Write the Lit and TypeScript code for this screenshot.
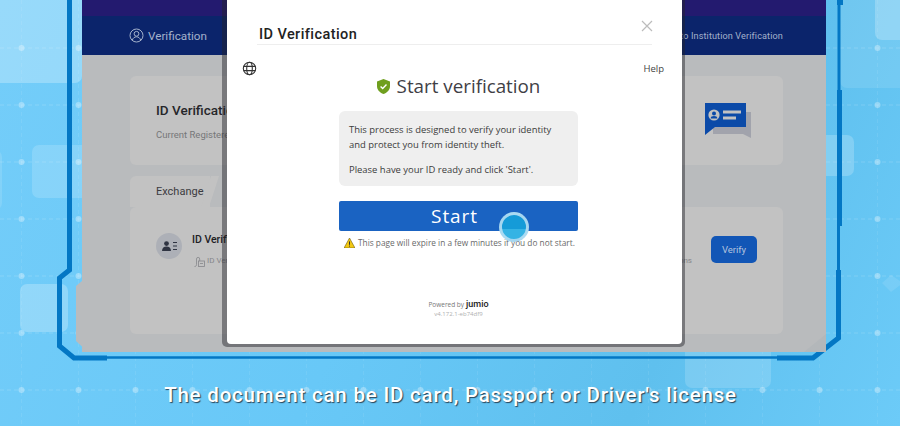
import { LitElement, html, css, svg } from "lit";
import { customElement } from "lit/decorators.js";

const DOT_X = [21.5, 78.5, 135.5, 192.5, 249.5, 306.5, 363.5, 420.5, 477.5, 534.5, 591.5, 648.5, 705.5, 762.5, 819.5, 877.5];
const DOT_Y = [48, 105, 162, 219, 276, 333, 390];

// light squares of the backdrop: x, y, w, h, opacity
const TILES = [
  [-12, -12, 94, 95, 0.26],
  [32, 145, 60, 53, 0.16],
  [20, 284, 48, 48, 0.24],
  [840, -12, 72, 100, 0.1],
  [875, -12, 40, 52, 0.22],
  [815, 135, 39, 41, 0.2],
  [685, 340, 86, 48, 0.16],
  [-20, 150, 22, 60, 0.12],
];

@customElement("app-root")
export class AppRoot extends LitElement {
  static styles = css`
    :host {
      display: block;
      position: relative;
      width: 900px;
      height: 426px;
      overflow: hidden;
      background: linear-gradient(115deg, #74cdf9 0%, #68c8f7 45%, #5fc0ee 75%, #6ccbf8 100%);
      font-family: Roboto, "Liberation Sans", sans-serif;
    }

    .backdrop {
      position: absolute;
      inset: 0;
    }

    .stage {
      position: relative;
      display: flex;
      flex-direction: column;
    }

    .screen {
      width: 744px;
      height: 352px;
      margin-left: 82px;
      margin-right: 74px;
      display: flex;
      flex-direction: column;
      background: linear-gradient(100deg, #b9bcbe 0%, #b3b7ba 30%, #b6b7b9 70%, #b3b7ba 100%);
    }

    .skirt {
      position: absolute;
      left: 76px;
      top: 0;
      width: 750px;
      height: 352px;
      background: #b9bbbd;
      clip-path: polygon(6px 0, 750px 0, 750px 334px, 728px 352px, 12px 352px, 0 341px, 0 286px, 6px 281px);
    }

    .band {
      height: 16px;
      background: #231a6f;
      position: relative;
    }

    .nav {
      position: relative;
      height: 39px;
      padding: 0 43px 0 47px;
      display: flex;
      align-items: center;
      justify-content: space-between;
      background: #0b246b;
      color: #a4b2cc;
    }

    .nav-item {
      display: flex;
      align-items: center;
      gap: 4px;
      font-size: 11.7px;
    }

    .nav-item.small {
      font-size: 9.1px;
      letter-spacing: 0.12px;
    }

    .content {
      position: relative;
      padding: 21px 43px 0 48px;
      display: flex;
      flex-direction: column;
    }

    .card {
      height: 89px;
      padding: 0 32px 0 26px;
      box-sizing: border-box;
      display: flex;
      align-items: center;
      justify-content: space-between;
      border-radius: 6px;
      background: #c2c2c2;
    }

    .card h2 {
      margin: 0 0 11px;
      font-size: 13.5px;
      font-weight: 500;
      color: #26262a;
    }

    .card p {
      margin: 0;
      font-size: 9.5px;
      color: #767779;
    }

    .tab {
      position: relative;
      width: 80px;
      height: 31px;
      margin-top: 11px;
      padding: 9px 0 0 26px;
      box-sizing: border-box;
      border-radius: 6px 0 0 0;
      background: #c2c2c2;
      font-size: 11px;
      color: #3b3b3f;
    }

    .tab::after {
      content: "";
      position: absolute;
      top: 0;
      right: -4px;
      width: 8px;
      height: 31px;
      background: #c2c2c2;
      transform: skewX(-18deg);
    }

    .panel {
      position: relative;
      height: 127px;
      padding: 26px 26px 0;
      box-sizing: border-box;
      display: flex;
      justify-content: space-between;
      align-items: flex-start;
      border-radius: 6px;
      background: #c2c2c2;
    }

    .row {
      display: flex;
      gap: 10px;
    }

    .avatar {
      width: 26px;
      height: 26px;
      display: grid;
      place-items: center;
      border-radius: 50%;
      background: #adb0b7;
    }

    .row-title {
      font-size: 10.5px;
      font-weight: 500;
      line-height: 14px;
      color: #202024;
    }

    .row-sub {
      display: flex;
      align-items: center;
      gap: 2px;
      margin: 8px 0 0 2px;
      width: 498px;
      font-size: 8px;
      line-height: 12px;
      color: #85868a;
    }

    .row-sub span {
      flex: 1;
      text-align: right;
    }

    .row-sub span:first-of-type {
      flex: none;
    }

    .verify {
      width: 46px;
      height: 27px;
      margin-top: 3px;
      border: 0;
      padding: 0;
      border-radius: 5px;
      background: #1256b6;
      color: #b4c4de;
      font: 9.5px Roboto, sans-serif;
    }

    .caption {
      margin: 31px 0 0;
      text-align: center;
      padding-left: 1px;
      font-size: 20.5px;
      line-height: 24px;
      letter-spacing: 0.8px;
      font-weight: 500;
      color: #fff;
      text-shadow: 1px 1px 1px rgba(30, 45, 60, 0.85);
    }

    /* dialog lying over the page */
    .modal-shade {
      position: absolute;
      left: 222px;
      top: 0;
      padding: 0 3px 3px 5px;
      border-radius: 0 0 5px 5px;
      background: rgba(35, 35, 42, 0.46);
    }

    .modal {
      width: 455px;
      height: 344px;
      display: flex;
      flex-direction: column;
      border-radius: 0 0 4px 4px;
      background: #fff;
      font-family: "Open Sans", "Noto Sans", sans-serif;
    }

    .modal-head {
      height: 45px;
      margin: 0 30px;
      padding: 0 0 0 2px;
      box-sizing: border-box;
      display: flex;
      justify-content: space-between;
      border-bottom: 1px solid #eeeeee;
    }

    .modal-title {
      margin: 26px 0 0;
      font-family: Roboto, sans-serif;
      font-size: 14.5px;
      line-height: 18px;
      font-weight: 500;
      letter-spacing: 0.42px;
      color: #222;
    }

    .close {
      margin: 20px -1px 0 0;
    }

    .tools {
      height: 15px;
      padding: 16px 18px 0 15px;
      display: flex;
      justify-content: space-between;
      align-items: center;
      font-size: 9.5px;
      color: #444;
    }

    .body {
      width: 239px;
      margin: -6px 0 0 112px;
      display: flex;
      flex-direction: column;
    }

    .headline {
      margin: 0;
      display: flex;
      justify-content: center;
      align-items: center;
      gap: 7px;
      height: 32px;
      font-size: 18.8px;
      font-weight: 400;
      color: #3f4045;
    }

    .notice {
      height: 75px;
      margin-top: 9px;
      padding: 11px 24px 0 10px;
      box-sizing: border-box;
      border-radius: 6px;
      background: #efefef;
      font-size: 9.45px;
      line-height: 15px;
      color: #3c3c3c;
    }

    .notice p {
      margin: 0 0 10px;
    }

    .start {
      position: relative;
      height: 30px;
      margin-top: 15px;
      padding: 0 8px 0 0;
      border: 0;
      border-radius: 2px;
      background: #1a63c2;
      color: #fff;
      font-family: "Open Sans", sans-serif;
      font-size: 19px;
      letter-spacing: 0.9px;
    }

    .tap {
      position: absolute;
      left: 160px;
      top: 11px;
      width: 24px;
      height: 24px;
      border: 3px solid rgba(190, 225, 245, 0.85);
      border-radius: 50%;
      background: linear-gradient(#159bd8 0 58%, #35b3e4 58%);
    }

    .warning {
      margin: 5px 0 0 5px;
      display: flex;
      align-items: center;
      gap: 3px;
      height: 13px;
      white-space: nowrap;
      font-size: 8.3px;
      color: #6a6a6a;
    }

    .warning svg {
      flex: none;
    }

    .powered {
      margin: 50px 0 0;
      display: flex;
      justify-content: center;
      align-items: baseline;
      gap: 2px;
      font-size: 6.5px;
      color: #777;
    }

    .powered b {
      font-family: Roboto, sans-serif;
      font-size: 9px;
      font-weight: 500;
      color: #222;
    }

    .version {
      margin: 1px 0 0;
      text-align: center;
      font-size: 6px;
      color: #b0b0b0;
    }
  `;

  private backdrop() {
    return html`<svg class="backdrop" width="900" height="426" viewBox="0 0 900 426">
      ${TILES.map(
        ([x, y, w, h, o]) => svg`<rect x=${x} y=${y} width=${w} height=${h} rx="7" fill="#fff" opacity=${o} />`
      )}
      <path d="M882 283l9-8 12 8-12 9z" fill="#fff" opacity=".1" />
      ${DOT_Y.map(
        (y) => svg`<line x1="0" x2="900" y1=${y} y2=${y} stroke="#fff" stroke-opacity=".16" stroke-dasharray="4 3" />`
      )}
      ${DOT_X.map(
        (x) => svg`<line y1="0" y2="426" x1=${x} x2=${x} stroke="#fff" stroke-opacity=".08" stroke-dasharray="4 3" />`
      )}
      ${DOT_Y.flatMap((y) =>
        DOT_X.map((x) => svg`<circle cx=${x} cy=${y} r="3" fill="#fff" opacity=".32" />`)
      )}
      <g fill="none" stroke="#0377c4" stroke-linejoin="miter">
        <path d="M69.5 0V270L59.5 278V346L74 358H107" stroke-width="5" />
        <path d="M107 357.5H777" stroke-width="2.5" />
        <path d="M777 358H813L838.5 338V270" stroke-width="5" />
        <path d="M838.5 270V226" stroke-width="3" />
        <path d="M839.5 226V90" stroke-width="5" />
        <path d="M839 90V0" stroke-width="3" />
      </g>
      <rect x="837" y="0" width="6" height="5" fill="#0377c4" />
    </svg>`;
  }

  private navIcon() {
    return html`<svg width="15" height="15" viewBox="0 0 15 15" fill="none" stroke="#a4b2cc" stroke-width="1">
      <circle cx="7.5" cy="7.5" r="6.5" />
      <circle cx="7.5" cy="5.8" r="2.4" />
      <path d="M3.2 12.4c.7-2.4 2.4-3.6 4.3-3.6s3.6 1.2 4.3 3.6" />
    </svg>`;
  }

  private chatIcon() {
    return html`<svg width="46" height="35" viewBox="0 0 46 35">
      <path d="M8 9H46V35L38 31H8z" fill="#a1a3ac" />
      <path d="M0 0H41V24H10L0 32z" fill="#0b4aa8" />
      <circle cx="9" cy="12" r="5.6" fill="#c2c2c2" />
      <circle cx="9" cy="10.4" r="2" fill="#0b4aa8" />
      <path d="M5.6 15.6c0-1.8 1.5-2.6 3.4-2.6s3.4.8 3.4 2.6z" fill="#0b4aa8" />
      <rect x="18" y="7.5" width="18" height="3" fill="#c2c2c2" />
      <rect x="18" y="13.5" width="13" height="3" fill="#c2c2c2" />
    </svg>`;
  }

  render() {
    return html`
      ${this.backdrop()}
      <div class="stage">
        <div class="skirt"></div>
        <div class="screen">
          <div class="band"></div>
          <nav class="nav">
            <div class="nav-item">${this.navIcon()}Verification</div>
            <div class="nav-item small">Switch to Institution Verification</div>
          </nav>
          <div class="content">
            <section class="card">
              <div>
                <h2>ID Verification</h2>
                <p>Current Registered</p>
              </div>
              ${this.chatIcon()}
            </section>
            <div class="tab">Exchange</div>
            <section class="panel">
              <div class="row">
                <div class="avatar">
                  <svg width="15" height="10" viewBox="0 0 15 10" fill="#2f3442">
                    <circle cx="4.5" cy="2.6" r="2.4" />
                    <path d="M0 10c0-3 2-4.4 4.5-4.4S9 7 9 10z" />
                    <path d="M11 1h4v1h-4zM11 4.5h4v1h-4zM11 8h4v1h-4z" />
                  </svg>
                </div>
                <div>
                  <div class="row-title">ID Verification</div>
                  <div class="row-sub">
                    <svg width="11" height="11" viewBox="0 0 11 11" fill="none" stroke="#85868a" stroke-width=".8">
                      <path d="M.5 10.5c1.4 0 2-.6 2-2V3a1.6 1.6 0 0 1 3.2 0v2" />
                      <rect x="4.5" y="5" width="6" height="5.5" />
                      <path d="M6 7.5h3" />
                    </svg>
                    <span>ID Verification</span>
                    <span>Transactions</span>
                  </div>
                </div>
              </div>
              <button class="verify">Verify</button>
            </section>
          </div>
        </div>
        <p class="caption">The document can be ID card, Passport or Driver's license</p>
      </div>
      <div class="modal-shade">
        <div class="modal">
          <header class="modal-head">
            <h1 class="modal-title">ID Verification</h1>
            <svg class="close" width="12" height="12" viewBox="0 0 12 12" stroke="#bcbcbc" stroke-width="1.2">
              <path d="M1 1l10 10M11 1L1 11" />
            </svg>
          </header>
          <div class="tools">
            <svg width="15" height="15" viewBox="0 0 15 15" fill="none" stroke="#333" stroke-width="1.1">
              <circle cx="7.5" cy="7.5" r="6.2" />
              <ellipse cx="7.5" cy="7.5" rx="2.8" ry="6.2" />
              <path d="M1.6 5.4h11.8M1.6 9.6h11.8" />
            </svg>
            <span>Help</span>
          </div>
          <div class="body">
            <h2 class="headline">
              <svg width="13" height="15" viewBox="0 0 13 15">
                <path d="M6.5 0L13 2.4V7c0 3.8-2.6 6.6-6.5 8C2.6 13.6 0 10.8 0 7V2.4z" fill="#6f9f1e" />
                <path d="M3.6 7.4l2.1 2.1 3.8-3.9" fill="none" stroke="#fff" stroke-width="1.4" />
              </svg>
              Start verification
            </h2>
            <div class="notice">
              <p>This process is designed to verify your identity and protect you from identity theft.</p>
              <p>Please have your ID ready and click 'Start'.</p>
            </div>
            <button class="start">Start<span class="tap"></span></button>
            <div class="warning">
              <svg width="11" height="10" viewBox="0 0 11 10">
                <path d="M5.5 0L11 10H0z" fill="#f2c811" stroke="#6b5a10" stroke-width=".6" />
                <path d="M5.5 3.4v3.4M5.5 7.6v1" stroke="#333" stroke-width="1" />
              </svg>
              This page will expire in a few minutes if you do not start.
            </div>
            <p class="powered">Powered by <b>jumio</b></p>
            <p class="version">v4.172.1-eb74df9</p>
          </div>
        </div>
      </div>
    `;
  }
}
